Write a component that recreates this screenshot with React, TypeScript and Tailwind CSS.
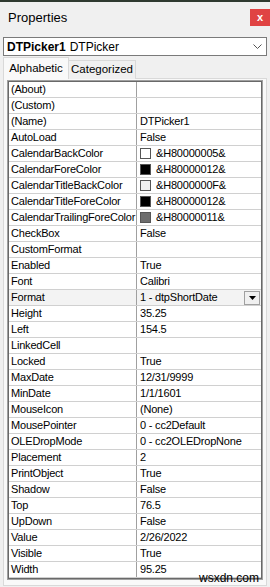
import React from 'react';

type Prop = { name: string; value?: string; swatch?: string; dropdown?: boolean };

const props: Prop[] = [
  { name: '(About)' },
  { name: '(Custom)' },
  { name: '(Name)', value: 'DTPicker1' },
  { name: 'AutoLoad', value: 'False' },
  { name: 'CalendarBackColor', value: '&H80000005&', swatch: '#ffffff' },
  { name: 'CalendarForeColor', value: '&H80000012&', swatch: '#000000' },
  { name: 'CalendarTitleBackColor', value: '&H8000000F&', swatch: '#f0f0f0' },
  { name: 'CalendarTitleForeColor', value: '&H80000012&', swatch: '#000000' },
  { name: 'CalendarTrailingForeColor', value: '&H80000011&', swatch: '#6d6d6d' },
  { name: 'CheckBox', value: 'False' },
  { name: 'CustomFormat' },
  { name: 'Enabled', value: 'True' },
  { name: 'Font', value: 'Calibri' },
  { name: 'Format', value: '1 - dtpShortDate', dropdown: true },
  { name: 'Height', value: '35.25' },
  { name: 'Left', value: '154.5' },
  { name: 'LinkedCell' },
  { name: 'Locked', value: 'True' },
  { name: 'MaxDate', value: '12/31/9999' },
  { name: 'MinDate', value: '1/1/1601' },
  { name: 'MouseIcon', value: '(None)' },
  { name: 'MousePointer', value: '0 - cc2Default' },
  { name: 'OLEDropMode', value: '0 - cc2OLEDropNone' },
  { name: 'Placement', value: '2' },
  { name: 'PrintObject', value: 'True' },
  { name: 'Shadow', value: 'False' },
  { name: 'Top', value: '76.5' },
  { name: 'UpDown', value: 'False' },
  { name: 'Value', value: '2/26/2022' },
  { name: 'Visible', value: 'True' },
  { name: 'Width', value: '95.25' },
];

function Row({ p }: { p: Prop }) {
  return (
    <div className={`flex h-[16px] border-b border-[#d0d0d0] ${p.dropdown ? 'bg-[#f3f3f3]' : 'bg-white'}`}>
      <div className="w-[128px] shrink-0 border-r border-[#a0a0a0] pl-[2px] leading-[15px] whitespace-nowrap overflow-hidden">
        {p.name}
      </div>
      <div className="flex flex-1 items-center pl-[3px] leading-[15px] whitespace-nowrap overflow-hidden">
        {p.swatch && (
          <span
            className="mr-[5px] inline-block h-[11px] w-[11px] shrink-0 border border-[#555]"
            style={{ backgroundColor: p.swatch }}
          />
        )}
        <span className="flex-1">{p.value}</span>
        {p.dropdown && (
          <span className="mr-[1px] flex h-[14px] w-[16px] items-center justify-center border border-[#a0a0a0] bg-[#f0f0f0]">
            <svg width="7" height="4" viewBox="0 0 7 4">
              <path d="M0 0h7L3.5 4z" fill="#000" />
            </svg>
          </span>
        )}
      </div>
    </div>
  );
}

export default function App() {
  return (
    <div
      className="relative h-[587px] w-[270px] overflow-hidden border-t-2 border-[#2f3a30] bg-[#f0f0f0] text-black"
      style={{ fontFamily: '"Liberation Sans", Arial, sans-serif' }}
    >
      {/* Title bar */}
      <div className="flex h-[35px] items-start justify-between">
        <span className="pl-[8px] pt-[6px] text-[13px]">Properties</span>
        <button className="mt-[7px] flex h-[17px] w-[20px] items-center justify-center bg-[#e04343] text-[11px] font-bold leading-none text-white">
          x
        </button>
      </div>

      {/* Object dropdown */}
      <div className="mx-[3px] flex h-[19px] items-center border border-[#7a7a7a] bg-white pl-[3px] pr-[4px] text-[12px]">
        <span className="font-bold">DTPicker1</span>
        <span className="ml-[4px] flex-1">DTPicker</span>
        <svg width="9" height="5" viewBox="0 0 9 5">
          <path d="M0.5 0.5L4.5 4.5L8.5 0.5" stroke="#555" fill="none" />
        </svg>
      </div>

      {/* Tabs */}
      <div className="mt-[1px] flex h-[22px] items-end pl-[3px] text-[11.5px]">
        <div className="relative z-10 flex h-[22px] w-[66px] items-center justify-center border border-b-0 border-[#d9d9d9] bg-[#f9f9f9]">
          Alphabetic
        </div>
        <div className="flex h-[19px] w-[67px] items-center justify-center border border-b-0 border-l-0 border-[#d9d9d9] bg-[#f0f0f0]">
          Categorized
        </div>
      </div>

      {/* Tab panel */}
      <div className="mx-[3px] -mt-px border border-[#d9d9d9] bg-[#f9f9f9] px-[3px] pb-[5px] pt-[1px]">
        <div className="border border-[#a0a0a0]">
          <div className="border border-[#696969] bg-white text-[11px] tracking-[-0.2px]">
            {props.map((p) => (
              <Row key={p.name} p={p} />
            ))}
          </div>
        </div>
      </div>

      <span className="absolute bottom-[3px] right-[11px] text-[12px] leading-none text-black">wsxdn.com</span>
    </div>
  );
}
